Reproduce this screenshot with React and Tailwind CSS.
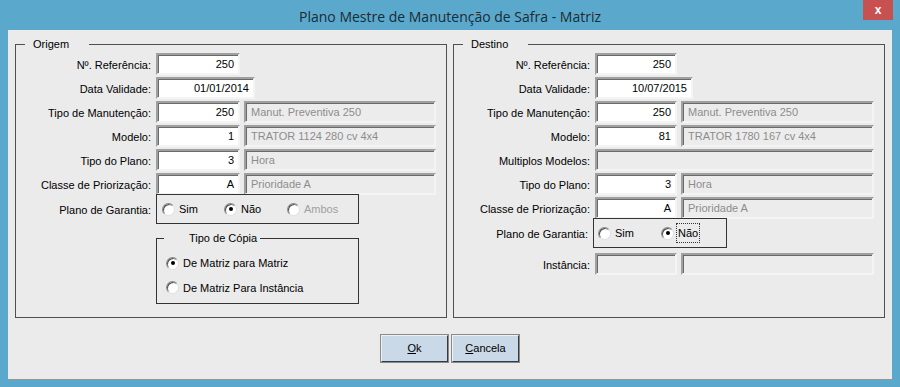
import React from 'react'

const sunken =
  'border-2 border-t-[#a0a0a0] border-l-[#a0a0a0] border-b-[#f4f4f4] border-r-[#f4f4f4] shadow-[inset_1px_1px_0_#6a6a6a]'

function Field({ value, w, desc, muted }) {
  return (
    <div
      className={`${sunken} h-[22px] flex items-center ${desc ? 'justify-start pl-[5px]' : 'justify-end pr-[4px]'} ${
        muted ? 'bg-[#ececec] text-[#8c8c8c]' : 'bg-white text-black'
      }`}
      style={{ width: w }}
    >
      {value}
    </div>
  )
}

function Row({ label, labelW, children }) {
  return (
    <div className="flex items-center h-[22px]">
      <div className="text-right pr-[5px] pt-[3px]" style={{ width: labelW }}>
        {label}
      </div>
      <div className="flex gap-[4px]">{children}</div>
    </div>
  )
}

function Radio({ checked, disabled, label, focus }) {
  return (
    <div className="flex items-center gap-[4px]">
      <div className="w-[13px] h-[13px] rounded-full bg-white border border-t-[#8a8a8a] border-l-[#8a8a8a] border-b-[#e0e0e0] border-r-[#e0e0e0] shadow-[inset_1px_1px_0_#505050] flex items-center justify-center">
        {checked && <div className="w-[4px] h-[4px] rounded-full bg-black" />}
      </div>
      <span
        className={`${disabled ? 'text-[#a0a0a0]' : 'text-black'} ${
          focus ? 'outline outline-1 outline-dotted outline-[#333] outline-offset-[1px]' : ''
        }`}
      >
        {label}
      </span>
    </div>
  )
}

function Group({ title, children }) {
  return (
    <fieldset className="w-[432px] h-[280px] border border-[#505050] m-0 p-0">
      <legend className="ml-[9px] pl-[8px] pr-[20px] text-black leading-[13px]">{title}</legend>
      {children}
    </fieldset>
  )
}

export default function App() {
  return (
    <div
      className="w-[900px] h-[387px] bg-[#5aa9cc] px-[8px] pb-[8px] flex flex-col"
      style={{ fontFamily: '"Liberation Sans", Arial, sans-serif' }}
    >
      {/* title bar */}
      <div className="h-[30px] grid grid-cols-[1fr_auto_1fr] items-start">
        <div />
        <div
          className="pt-[6px] text-[14px] text-[#1e2a33]"
          style={{ fontFamily: '"Open Sans", "Noto Sans", sans-serif' }}
        >
          Plano Mestre de Manutenção de Safra - Matriz
        </div>
        <div className="flex justify-end mr-[-1px]">
          <div className="w-[30px] h-[20px] bg-[#c75050] text-white text-[12px] font-bold flex items-center justify-center">
            x
          </div>
        </div>
      </div>

      {/* client */}
      <div className="flex-1 bg-[#ebebeb] flex flex-col text-[11px] text-black">
        <div className="flex gap-[6px] pl-[7px] pt-[8px]">
          <Group title="Origem">
            <div className="flex flex-col gap-[2px] pt-[2px]">
              <Row label="Nº. Referência:" labelW={140}>
                <Field value="250" w={84} />
              </Row>
              <Row label="Data Validade:" labelW={140}>
                <Field value="01/01/2014" w={99} />
              </Row>
              <Row label="Tipo de Manutenção:" labelW={140}>
                <Field value="250" w={84} />
                <Field value="Manut. Preventiva 250" w={192} desc muted />
              </Row>
              <Row label="Modelo:" labelW={140}>
                <Field value="1" w={84} />
                <Field value="TRATOR 1124 280 cv 4x4" w={192} desc muted />
              </Row>
              <Row label="Tipo do Plano:" labelW={140}>
                <Field value="3" w={84} />
                <Field value="Hora" w={192} desc muted />
              </Row>
              <Row label="Classe de Priorização:" labelW={140}>
                <Field value="A" w={84} />
                <Field value="Prioridade A" w={192} desc muted />
              </Row>
            </div>
            <div className="flex mt-[-1px]">
              <div className="w-[140px] text-right pr-[5px] pt-[8px]">Plano de Garantia:</div>
              <div className="w-[203px] h-[30px] border border-[#333] flex items-center pl-[5px]">
                <div className="w-[62px]">
                  <Radio label="Sim" />
                </div>
                <div className="w-[63px]">
                  <Radio label="Não" checked />
                </div>
                <Radio label="Ambos" disabled />
              </div>
            </div>
            <div className="ml-[140px] mt-[8px] w-[203px]">
              <fieldset className="h-[72px] border border-[#333] m-0 p-0">
                <legend className="ml-[7px] pl-[25px] pr-[3px] leading-[13px]">Tipo de Cópia</legend>
                <div className="flex flex-col gap-[8px] pl-[9px] pt-[10px]">
                  <Radio label="De Matriz para Matriz" checked />
                  <Radio label="De Matriz Para Instância" />
                </div>
              </fieldset>
            </div>
          </Group>

          <Group title="Destino">
            <div className="flex flex-col gap-[2px] pt-[2px]">
              <Row label="Nº. Referência:" labelW={141}>
                <Field value="250" w={82} />
              </Row>
              <Row label="Data Validade:" labelW={141}>
                <Field value="10/07/2015" w={98} />
              </Row>
              <Row label="Tipo de Manutenção:" labelW={141}>
                <Field value="250" w={82} />
                <Field value="Manut. Preventiva 250" w={193} desc muted />
              </Row>
              <Row label="Modelo:" labelW={141}>
                <Field value="81" w={82} />
                <Field value="TRATOR 1780 167 cv 4x4" w={193} desc muted />
              </Row>
              <Row label="Multiplos Modelos:" labelW={141}>
                <Field value="" w={279} desc muted />
              </Row>
              <Row label="Tipo do Plano:" labelW={141}>
                <Field value="3" w={82} />
                <Field value="Hora" w={193} desc muted />
              </Row>
              <Row label="Classe de Priorização:" labelW={141}>
                <Field value="A" w={82} />
                <Field value="Prioridade A" w={193} desc muted />
              </Row>
            </div>
            <div className="flex mt-[-1px]">
              <div className="w-[139px] text-right pr-[5px] pt-[8px]">Plano de Garantia:</div>
              <div className="w-[134px] h-[30px] border border-[#333] flex items-center pl-[4px]">
                <div className="w-[63px]">
                  <Radio label="Sim" />
                </div>
                <Radio label="Não" checked focus />
              </div>
            </div>
            <div className="mt-[5px]">
              <Row label="Instância:" labelW={141}>
                <Field value="" w={82} muted />
                <Field value="" w={193} desc muted />
              </Row>
            </div>
          </Group>
        </div>

        <div className="flex justify-center gap-[4px] mt-[17px]">
          <button className="w-[67px] h-[27px] bg-[#c9d9e8] border border-t-[#f0f0f0] border-l-[#f0f0f0] border-b-[#3a3a3a] border-r-[#3a3a3a] shadow-[0_0_0_1px_#8a8a8a] text-[11px] text-black">
            <span className="underline">O</span>k
          </button>
          <button className="w-[67px] h-[27px] bg-[#c9d9e8] border border-t-[#f0f0f0] border-l-[#f0f0f0] border-b-[#3a3a3a] border-r-[#3a3a3a] shadow-[0_0_0_1px_#8a8a8a] text-[11px] text-black">
            <span className="underline">C</span>ancela
          </button>
        </div>
      </div>
    </div>
  )
}
